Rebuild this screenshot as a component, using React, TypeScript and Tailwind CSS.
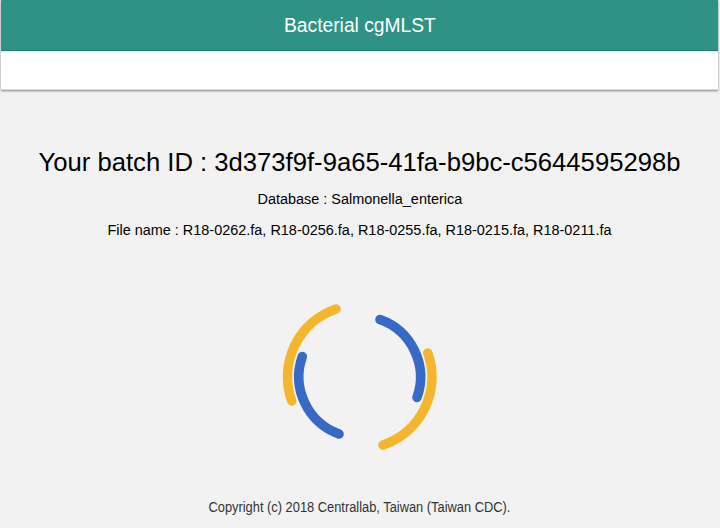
export default function App() {
  return (
    <div className="flex h-[528px] w-[720px] flex-col overflow-hidden bg-[#f2f2f2] pr-px font-['Liberation_Sans',Arial,sans-serif] text-black">
      <header className="mx-px shrink-0 bg-white shadow-[0_1px_2px_rgba(0,0,0,0.45)]">
        <div className="flex h-[51px] items-center justify-center border-b border-[#17816f] bg-[#2e9385] text-[20px] text-white">
          <span className="scale-x-[0.962]">Bacterial cgMLST</span>
        </div>
        <div className="h-[39px] border-y border-t-[#e2f1ef] border-b-[#dcdcdc]" />
      </header>
      <main className="flex flex-1 flex-col items-center whitespace-nowrap">
        <h1 className="mt-[56px] scale-x-[0.986] text-[26px] leading-[32px]">Your batch ID : 3d373f9f-9a65-41fa-b9bc-c5644595298b</h1>
        <p className="mt-[11px] scale-x-[0.932] text-[15.5px] leading-[20px]">Database : Salmonella_enterica</p>
        <p className="mt-[11px] scale-x-[0.932] text-[15.5px] leading-[20px]">File name : R18-0262.fa, R18-0256.fa, R18-0255.fa, R18-0215.fa, R18-0211.fa</p>
        <svg className="mt-[57px] h-[160px] w-[160px]" viewBox="280 297 160 160" fill="none" strokeWidth="9.6" strokeLinecap="round">
          <path d="M336 309A71.8 71.8 0 0 0 291.7 401" stroke="#f4b62d" />
          <path d="M427.8 353A71.8 71.8 0 0 1 383 445" stroke="#f4b62d" />
          <path d="M380 319.6A61 61 0 0 1 417 397.5" stroke="#3869c6" />
          <path d="M302.3 356.5A61 61 0 0 0 339 434" stroke="#3869c6" />
        </svg>
      </main>
      <footer className="flex h-[42px] items-center justify-center text-[14px] text-[#333]">
        <p className="scale-x-[0.918]">Copyright (c) 2018 Centrallab, Taiwan (Taiwan CDC).</p>
      </footer>
    </div>
  );
}
